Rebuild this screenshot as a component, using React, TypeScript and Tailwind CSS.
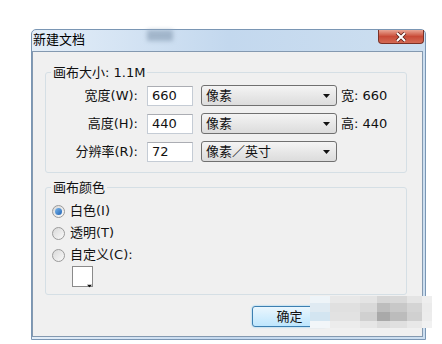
import React from "react";

const FONT = "font-['DejaVu_Sans','Noto_Sans_CJK_SC',sans-serif]";

const Caret = ({ className = "" }: { className?: string }) => (
  <svg width="7" height="4" viewBox="0 0 7 4" className={className}>
    <path d="M0 0h7L3.5 4z" fill="#111" />
  </svg>
);

const SizeRow = ({
  label,
  value,
  unit,
  suffix,
}: {
  label: string;
  value: string;
  unit: string;
  suffix?: string;
}) => (
  <div className="flex h-[21px] items-center">
    <div className="w-[93px] text-right pr-[1px]">{label}</div>
    <div className="ml-[8px] flex h-[20px] w-[46px] items-center border border-[#c5ccd5] border-t-[#abadb3] bg-white pl-[4px]">
      {value}
    </div>
    <div className="ml-[8px] flex h-[21px] w-[136px] items-center justify-between rounded-[3px] border border-[#707070] bg-gradient-to-b from-[#f4f4f4] to-[#dcdcdc] pl-[4px] pr-[6px]">
      <span>{unit}</span>
      <Caret />
    </div>
    {suffix && <div className="ml-[4px]">{suffix}</div>}
  </div>
);

const Radio = ({ checked, label }: { checked?: boolean; label: string }) => (
  <div className="flex h-[22px] items-center">
    <div className="ml-[6px] flex h-[13px] w-[13px] items-center justify-center rounded-full border border-[#9a9a9a] bg-gradient-to-br from-[#d8d8d8] to-[#fafafa]">
      {checked && (
        <div className="h-[7px] w-[7px] rounded-full bg-gradient-to-br from-[#7cb7ea] to-[#1e63b5]" />
      )}
    </div>
    <span className="ml-[5px]">{label}</span>
  </div>
);

// pixelated (blurred-out) cancel button area
const mosaic = [
  ["#eef4f8", "#e8e8e8", "#e4e4e4", "#d6d6d6", "#d8d8d8", "#e4e4e4", "#eeeeee"],
  ["#dfeaf2", "#e0e0e0", "#d9d9d9", "#bdbdbd", "#c8c8c8", "#d4d4d4", "#ebebeb"],
  ["#d3e5f1", "#e2e2e2", "#d0d0d0", "#a9a9a9", "#bcbcbc", "#d0d0d0", "#ececec"],
  ["#f2f6f9", "#ececec", "#e6e6e6", "#dcdcdc", "#e0e0e0", "#e8e8e8", "#f1f1f1"],
];

export default function App() {
  return (
    <div className={`relative h-[344px] w-[442px] overflow-hidden bg-white pl-[31px] pt-[29px] text-[13px] text-[#111] ${FONT}`}>
      <div className="flex h-[311px] w-[395px] flex-col rounded-t-[5px] border border-[#7a96b4] bg-gradient-to-r from-[#e4eef8] via-[#c3d8ee] to-[#cddff0]">
        <div className="flex h-[21px] items-start justify-between">
          <span className="ml-[1px] mt-[2px] text-[13px] leading-[16px] text-black">新建文档</span>
          <div className="mr-[1px] flex h-[14px] w-[46px] items-center justify-center rounded-b-[4px] border border-t-0 border-[#7b3126] bg-gradient-to-b from-[#e8a595] via-[#c84a37] to-[#d46a55]">
            <svg width="14" height="10" viewBox="0 0 14 10">
              <path d="M3 1l8 8M11 1l-8 8" stroke="#5a1f18" strokeWidth="3.6" />
              <path d="M3 1l8 8M11 1l-8 8" stroke="#fff" strokeWidth="2" />
            </svg>
          </div>
        </div>
        <div className="mb-[2px] mr-[2px] flex flex-1 flex-col border border-[#8499b0] bg-[#f0f0f0] px-[12px]">
          <fieldset className="mr-[3px] mt-[13px] rounded-[3px] border border-[#d5dfe5] pb-[10px] pt-[5px]">
            <legend className="ml-[5px] px-[2px] leading-[15px]">画布大小: 1.1M</legend>
            <div className="flex flex-col gap-[7px]">
              <SizeRow label="宽度(W):" value="660" unit="像素" suffix="宽: 660" />
              <SizeRow label="高度(H):" value="440" unit="像素" suffix="高: 440" />
              <SizeRow label="分辨率(R):" value="72" unit="像素／英寸" />
            </div>
          </fieldset>
          <fieldset className="mr-[3px] mt-[7px] rounded-[3px] border border-[#d5dfe5] pb-[7px] pt-[5px]">
            <legend className="ml-[5px] px-[2px] leading-[15px]">画布颜色</legend>
            <Radio checked label="白色(I)" />
            <Radio label="透明(T)" />
            <Radio label="自定义(C):" />
            <div className="relative ml-[26px] h-[21px] w-[21px] border border-[#8a8a8a] bg-white">
              <Caret className="absolute bottom-[-2px] right-[-1px] scale-75" />
            </div>
          </fieldset>
          <div className="mt-[11px] flex justify-end gap-[7px] pr-[1px]">
            <div className="flex h-[21px] w-[75px] items-center justify-center rounded-[3px] border border-[#3c7fb1] bg-gradient-to-b from-[#eaf6fd] to-[#bee6fd] shadow-[0_0_2px_#6fc6f4]">
              确定
            </div>
            <div className="h-[21px] w-[75px] rounded-[3px] border border-[#c8c8c8] bg-[#e6e6e6]" />
          </div>
        </div>
      </div>
      <div className="absolute left-[147px] top-[30px] h-[11px] w-[26px] bg-[#8fa4ba] opacity-70 blur-[2px]" />
      <div className="absolute left-[310px] top-[296px] grid w-[122px] grid-cols-[20px_30px_17px_13px_17px_15px_10px] blur-[0.6px]">
        {mosaic.map((row, r) =>
          row.map((c, i) => (
            <div key={`${r}-${i}`} className={r === 1 || r === 2 ? "h-[9px]" : "h-[7px]"} style={{ background: c }} />
          ))
        )}
      </div>
    </div>
  );
}
